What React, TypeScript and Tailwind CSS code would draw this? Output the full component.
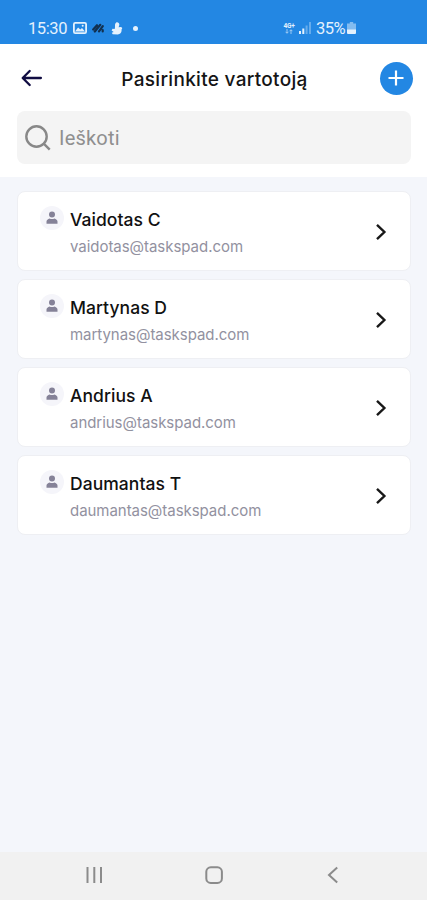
import { useState } from "react";

interface User {
  name: string;
  email: string;
}

const users: User[] = [
  { name: "Vaidotas C", email: "vaidotas@taskspad.com" },
  { name: "Martynas D", email: "martynas@taskspad.com" },
  { name: "Andrius A", email: "andrius@taskspad.com" },
  { name: "Daumantas T", email: "daumantas@taskspad.com" },
];

function StatusBar() {
  return (
    <div className="flex h-11 shrink-0 items-center bg-[#2387e3] pt-3 pl-7 pr-[71px] font-['Roboto',sans-serif] text-[16.5px] leading-none text-[#e4f1fd]">
      <span className="w-[39px] whitespace-nowrap pt-0.5 tracking-[-0.4px]">15:30</span>
      <svg className="ml-1.5 h-3 w-[14px]" viewBox="0 0 14 12" fill="none">
        <rect x="0.9" y="0.9" width="12.2" height="10.2" rx="1.4" stroke="currentColor" strokeWidth="1.8" />
        <path d="M2 9.6 5.1 5.6l2.2 2L9 6l3 3.6z" fill="currentColor" />
        <circle cx="9.7" cy="3.7" r="1" fill="currentColor" />
      </svg>
      <svg className="ml-[5px] h-2.5 w-3" viewBox="0 0 12 10" fill="none" stroke="#12304f" strokeWidth="2.2" strokeLinecap="round">
        <path d="M1.2 6.5 5 2.2M2.8 8.5 8.3 1.8M7 8.3l3.8-5.2M10.7 8.5V7" />
      </svg>
      <svg className="ml-[7px] h-[13px] w-3" viewBox="0 0 12 13" fill="currentColor">
        <path d="M5.2.4C7.5-.2 9 1.8 8.1 3.7L7.6 5.2l2.1-.3c1.8.2 1.8 1.6.8 2.7.5 2.9-1.1 4.8-3.7 5L1.7 12.3.8 10.8l1.9-.9L.6 8.5l.9-1.8 2.1.2C4.6 5 3.1 2.2 5.2.4z" />
      </svg>
      <span className="ml-[10px] size-[5px] rounded-full bg-[#e4f1fd]" />
      <span className="ml-auto flex w-3 flex-col items-center">
        <span className="text-[6.5px] font-bold leading-[6px] tracking-[-0.3px]">4G+</span>
        <svg className="h-[5px] w-2" viewBox="0 0 8 5" fill="none" stroke="currentColor" strokeWidth="0.9" opacity="0.7">
          <path d="M2 0v4M.6 2.8 2 4.3l1.4-1.5M6 5V1M4.6 2.2 6 .7l1.4 1.5" />
        </svg>
      </span>
      <svg className="ml-1 h-3 w-3" viewBox="0 0 12 12" fill="currentColor">
        <path d="M0 9h2v3H0zM3.3 6.5h2V12h-2z" />
        <path d="M6.6 3.5h2V12h-2zM10 0h2v12h-2z" opacity="0.35" />
      </svg>
      <span className="ml-[5px] w-[29px] whitespace-nowrap pt-0.5 tracking-[-0.5px]">35%</span>
      <svg className="ml-0.5 h-3 w-[9px]" viewBox="0 0 9 12" fill="currentColor">
        <path d="M2.8 0h3.4v1.5H9V8H0V1.5h2.8z" opacity="0.5" />
        <path d="M0 7.5h9V11a1 1 0 0 1-1 1H1a1 1 0 0 1-1-1z" />
      </svg>
    </div>
  );
}

function UserCard({ user }: { user: User }) {
  return (
    <button className="flex h-20 w-full items-center rounded-lg border border-[#eeeff3] bg-white pl-[22px] pr-[23px] text-left">
      <span className="mb-[27px] flex size-6 items-center justify-center rounded-full bg-[#f5f5fa]">
        <svg className="h-3.5 w-3" viewBox="0 0 12 14" fill="#858298">
          <circle cx="6" cy="3.6" r="3" />
          <path d="M.5 12.8v-2.3C.5 8.8 2 8 3.6 7.4c1.4.9 3.4.9 4.8 0 1.6.6 3.1 1.4 3.1 3.1v2.3z" />
        </svg>
      </span>
      <span className="ml-1.5 flex flex-1 flex-col pt-1">
        <span className="text-[17.5px] font-medium leading-6 tracking-[0.05px] text-[#111]">{user.name}</span>
        <span className="mt-[3px] text-[15px] leading-6 tracking-[-0.04px] text-[#9291a0]">{user.email}</span>
      </span>
      <svg className="mt-0.5 h-[18px] w-3" viewBox="0 0 12 18" fill="none" stroke="#181818" strokeWidth="2.4">
        <path d="m2 1.8 7.4 7.2L2 16.2" />
      </svg>
    </button>
  );
}

function NavigationBar() {
  return (
    <div className="flex h-12 shrink-0 items-center justify-between bg-[#f1f1f1] px-[85px] pb-0.5 text-[#8b8b8b]">
      <svg className="size-[18px]" viewBox="0 0 18 18" stroke="currentColor" strokeWidth="2">
        <path d="M2.5 1v16M9.3 1v16M16 1v16" />
      </svg>
      <svg className="size-[18px]" viewBox="0 0 18 18" fill="none" stroke="currentColor" strokeWidth="2">
        <rect x="1.3" y="1.3" width="15.6" height="15.6" rx="4.5" />
      </svg>
      <svg className="size-[18px]" viewBox="0 0 18 18" fill="none" stroke="currentColor" strokeWidth="2">
        <path d="M13.2 1.5 5 9l8.2 7.5" />
      </svg>
    </div>
  );
}

export default function App() {
  const [query, setQuery] = useState("");

  const visible = users.filter((u) =>
    `${u.name} ${u.email}`.toLowerCase().includes(query.toLowerCase())
  );

  return (
    <div className="flex h-screen flex-col overflow-hidden bg-[#f4f6fb] font-['Inter',sans-serif]">
      <StatusBar />

      <header className="shrink-0 bg-white pr-4 pb-[13px] pl-[17px]">
        <div className="flex h-[67px] items-center justify-between pt-px pl-1">
          <svg className="h-[18px] w-[22px]" viewBox="0 0 22 18" fill="none" stroke="#100c42" strokeWidth="2.3" strokeLinecap="round" strokeLinejoin="round">
            <path d="M8.7 2 1.7 9l7 7M1.9 9h18" />
          </svg>
          <h1 className="ml-1.5 pt-1 text-[19px] font-medium tracking-[0.3px] text-[#151515]">Pasirinkite vartotoją</h1>
          <button className="-mr-0.5 flex size-[33px] items-center justify-center rounded-full bg-[#2387e3]">
            <svg className="size-4" viewBox="0 0 16 16" stroke="white" strokeWidth="2.2">
              <path d="M8 .5v15M.5 8h15" />
            </svg>
          </button>
        </div>
        <label className="flex h-[53px] items-center rounded-lg bg-[#f4f4f4] pl-2">
          <svg className="size-[26px]" viewBox="0 0 26 26" fill="none" stroke="#888" strokeWidth="2.4">
            <circle cx="11.5" cy="11.5" r="10.2" />
            <path d="m18.7 18.7 6 6" />
          </svg>
          <input
            value={query}
            onChange={(e) => setQuery(e.target.value)}
            placeholder="Ieškoti"
            className="ml-2 min-w-0 flex-1 bg-transparent font-['Roboto',sans-serif] text-xl tracking-[0.2px] outline-none placeholder:text-[#8f8f8f]"
          />
        </label>
      </header>

      <main className="flex flex-1 flex-col gap-2 pt-3.5 pr-4 pl-[17px]">
        {visible.map((user) => (
          <UserCard key={user.email} user={user} />
        ))}
      </main>

      <NavigationBar />
    </div>
  );
}
